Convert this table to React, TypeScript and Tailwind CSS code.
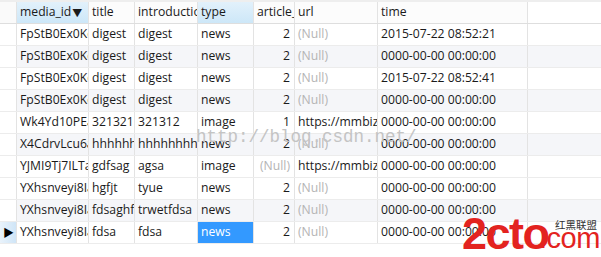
const cols = [
  { key: 'media_id', w: 'w-[72px]' },
  { key: 'title', w: 'w-[46px]' },
  { key: 'introduction', w: 'w-[63px]' },
  { key: 'type', w: 'w-[56px]' },
  { key: 'article_count', w: 'w-[41px]' },
  { key: 'url', w: 'w-[83px]' },
  { key: 'time', w: 'w-[150px]' },
]

type Row = string[]

const rows: Row[] = [
  ['FpStB0Ex0KdWl', 'digest', 'digest', 'news', '2', '', '2015-07-22 08:52:21'],
  ['FpStB0Ex0KdWl', 'digest', 'digest', 'news', '2', '', '0000-00-00 00:00:00'],
  ['FpStB0Ex0KdWl', 'digest', 'digest', 'news', '2', '', '2015-07-22 08:52:41'],
  ['FpStB0Ex0KdWl', 'digest', 'digest', 'news', '2', '', '0000-00-00 00:00:00'],
  ['Wk4Yd10PEabc', '321321', '321312', 'image', '1', 'https://mmbiz.qpic', '0000-00-00 00:00:00'],
  ['X4CdrvLcu6abc', 'hhhhhhh', 'hhhhhhhhhhhh', 'news', '2', '', '0000-00-00 00:00:00'],
  ['YJMI9Tj7ILTab', 'gdfsag', 'agsa', 'image', '', 'https://mmbiz.qpic', '0000-00-00 00:00:00'],
  ['YXhsnveyi8Iab', 'hgfjt', 'tyue', 'news', '2', '', '0000-00-00 00:00:00'],
  ['YXhsnveyi8Iab', 'fdsaghfds', 'trwetfdsa', 'news', '2', '', '0000-00-00 00:00:00'],
  ['YXhsnveyi8Iab', 'fdsa', 'fdsa', 'news', '2', '', '0000-00-00 00:00:00'],
]

const striped = [1, 3, 5, 8]

function Cell({ value, col, sel }: { value: string; col: number; sel: boolean }) {
  const w = cols[col].w
  const isNum = col === 4
  const nul = value === '' && (col === 4 || col === 5)
  return (
    <div
      className={`${w} shrink-0 h-full overflow-hidden whitespace-nowrap border-r border-[#e3e3e3] flex items-center ${
        isNum ? 'justify-end pr-[4px]' : 'pl-[3px]'
      } ${sel ? 'bg-[#3399ff] text-white' : ''}`}
    >
      {nul ? <span className="text-[#b4b4b4]">(Null)</span> : value}
    </div>
  )
}

export default function App() {
  return (
    <div className="relative w-[601px] h-[257px] overflow-hidden bg-white text-[12.2px] text-[#1a1a1a] font-['Open_Sans','Noto_Sans_CJK_SC',sans-serif] leading-none">
      {/* top strip */}
      <div className="h-[2px] bg-[#eeeeee]" />

      {/* header */}
      <div className="flex h-[22px] border-b border-[#dedede]">
        <div className="w-[17px] shrink-0 border-r border-[#e3e3e3] bg-[#fafafa]" />
        {cols.map((c, i) => (
          <div
            key={c.key}
            className={`${c.w} shrink-0 overflow-hidden whitespace-nowrap border-r border-[#e3e3e3] flex items-center pl-[3px] ${
              i === 0 || i === 3 ? 'bg-gradient-to-b from-[#e2f1fb] to-[#cde7f8]' : 'bg-[#fcfcfc]'
            }`}
          >
            {c.key}
            {i === 0 && <span className="ml-[1px] text-[10px]">▼</span>}
          </div>
        ))}
      </div>

      {/* rows */}
      {rows.map((r, ri) => {
        const last = ri === rows.length - 1
        return (
          <div
            key={ri}
            className={`flex h-[22px] border-b border-[#ececec] ${striped.includes(ri) ? 'bg-[#f5f6f9]' : 'bg-white'}`}
          >
            <div
              className={`w-[17px] shrink-0 border-r border-[#e3e3e3] flex items-center justify-end pr-[2px] ${
                last ? 'bg-gradient-to-r from-[#eaf3fb] to-[#cfe5f7]' : 'bg-white'
              }`}
            >
              {last && <span className="text-[11px] text-black">▶</span>}
            </div>
            {r.map((v, ci) => (
              <Cell key={ci} value={v} col={ci} sel={last && ci === 3} />
            ))}
          </div>
        )
      })}

      {/* watermark */}
      <div className="absolute left-[196px] top-[129px] text-[17.5px] text-[#c4c4c4] font-['Liberation_Mono',monospace] pointer-events-none">
        http://blog.csdn.net/
      </div>

      {/* 2cto logo */}
      <div className="absolute left-[462px] top-[211px] font-['Liberation_Sans',sans-serif] font-bold text-[45px] leading-none text-[#e3231f] tracking-[-1.5px] pointer-events-none">
        2cto
      </div>
      <div className="absolute left-[539px] top-[224px] font-['Liberation_Sans',sans-serif] text-[29px] leading-none text-[#e3231f] tracking-[-0.5px] pointer-events-none">
        .com
      </div>
      <div className="absolute left-[555px] top-[220px] text-[10.5px] leading-none text-[#333] font-['Noto_Sans_CJK_SC',sans-serif] pointer-events-none">
        红黑联盟
      </div>
    </div>
  )
}
